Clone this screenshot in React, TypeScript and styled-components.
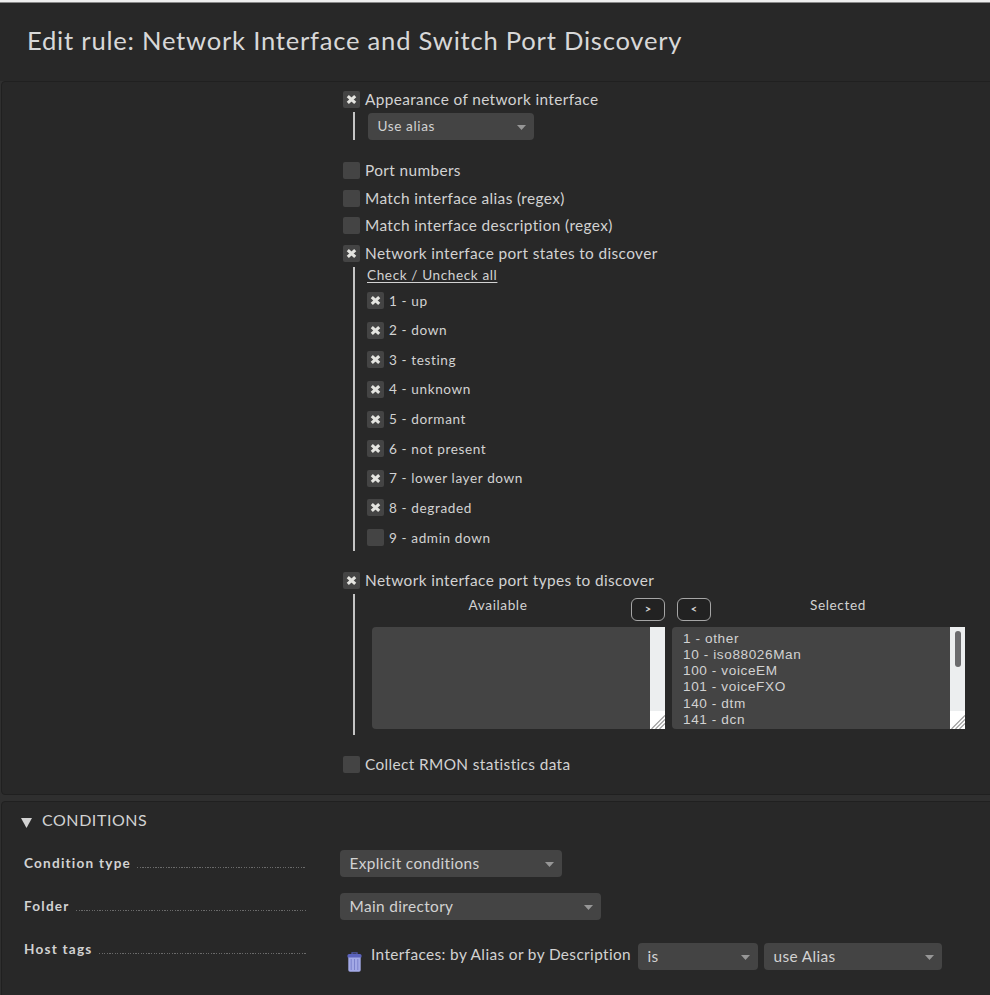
import React from 'react';
import styled, { createGlobalStyle } from 'styled-components';

const GlobalStyle = createGlobalStyle`
  *, *::before, *::after { box-sizing: border-box; }
  body {
    margin: 0;
    background: #303030;
    color: #d2d2d2;
    font-family: Lato, "Liberation Sans", sans-serif;
  }
`;

const Page = styled.div`
  width: 990px;
  height: 995px;
  overflow: hidden;
  display: flex;
  flex-direction: column;
  background: #2f2f2f;
`;

const Header = styled.header`
  height: 81px;
  flex: none;
  padding: 20px 0 0 27px;
  border-top: 2px solid #efefef;
  box-shadow: inset 0 1px 0 #8a8a8a;
  background: #282828;
`;

const Title = styled.h1`
  margin: 0;
  font-size: 25.6px;
  font-weight: 400;
  line-height: 36px;
  letter-spacing: 0.77px;
  white-space: nowrap;
  color: #d8d8d8;
`;

const Panel = styled.section<{ $height: number }>`
  height: ${(p) => p.$height}px;
  flex: none;
  margin: 0 -4px 6px 1px;
  border: 1px solid #202020;
  border-radius: 4px;
  background: #282828;
`;

const Options = styled.div`
  display: flex;
  flex-direction: column;
  padding: 9px 0 0 341px;
`;

const Option = styled.label<{ $gap?: number }>`
  display: flex;
  height: 17px;
  margin-top: ${(p) => p.$gap ?? 0}px;
  gap: 5px;
  font-size: 15.4px;
  line-height: 16px;
  letter-spacing: 0.37px;
  white-space: nowrap;
`;

const Box = styled.span`
  width: 17px;
  height: 17px;
  flex: none;
  display: grid;
  place-items: center;
  border-radius: 2px;
  background: #444444;
`;

const Nested = styled.div<{ $height: number; $gap?: number }>`
  height: ${(p) => p.$height}px;
  margin: ${(p) => p.$gap ?? 5}px 0 0 10px;
  border-left: 2px solid #c4c4c4;
`;

const Dropdown = styled.div<{ $width: number; $small?: boolean }>`
  width: ${(p) => p.$width}px;
  height: 27px;
  flex: none;
  display: flex;
  align-items: center;
  justify-content: space-between;
  padding: 0 8px 2px 9.500px;
  border-radius: 4px;
  background: #444444;
  font-size: ${(p) => (p.$small ? 13.6 : 15.4)}px;
  letter-spacing: ${(p) => (p.$small ? 0.6 : 0.37)}px;
  white-space: nowrap;

  svg { margin-top: 3px; }
`;

const AliasSlot = styled.div`
  padding: 1px 0 0 13px;
`;

const StateList = styled.div`
  display: flex;
  flex-direction: column;
  align-items: flex-start;
  padding-left: 12px;
`;

const CheckAll = styled.a`
  height: 17px;
  font-size: 13.6px;
  line-height: 17px;
  letter-spacing: 0.6px;
  text-decoration: underline;
  text-underline-offset: 2px;
`;

const State = styled.label`
  display: flex;
  align-items: center;
  gap: 5px;
  height: 17px;
  margin-bottom: 12.65px;
  font-size: 13.6px;
  letter-spacing: 0.6px;
  white-space: nowrap;

  &:first-of-type { margin-top: 8px; }
`;

const Transfer = styled.div`
  display: grid;
  grid-template-columns: 293px 293px;
  column-gap: 7px;
  padding: 2px 0 0 17px;
`;

const ListHead = styled.div<{ $reverse?: boolean }>`
  display: flex;
  flex-direction: ${(p) => (p.$reverse ? 'row-reverse' : 'row')};
  height: 31px;
  padding: ${(p) => (p.$reverse ? '0 0 0 5px' : '0')};
`;

const ListTitle = styled.span<{ $shift?: number }>`
  flex: 1;
  padding-right: ${(p) => p.$shift ?? 0}px;
  text-align: center;
  font-size: 13.6px;
  line-height: 18px;
  letter-spacing: 0.6px;
`;

const MoveButton = styled.button`
  width: 34px;
  height: 23px;
  margin: 2px 0 0;
  padding: 0 0 2px;
  border: 1px solid #a6a6a6;
  border-radius: 6px;
  background: #222222;
  color: #d2d2d2;
  font: 700 11px/19px Lato, sans-serif;
`;

const ListBox = styled.div`
  display: flex;
  height: 102px;
  overflow: hidden;
  border-radius: 4px 0 0 4px;
  background: #444444;
`;

const Items = styled.ul`
  flex: 1;
  margin: 0;
  padding: 4px 0 0 11px;
  list-style: none;
  font: 13.6px/16.15px "Liberation Sans", Arial, sans-serif;
  letter-spacing: 0.6px;
  white-space: nowrap;
`;

const Track = styled.div`
  width: 15px;
  display: flex;
  flex-direction: column;
  align-items: center;
  justify-content: space-between;
  background: #eceeef;
`;

const Thumb = styled.div<{ $visible: boolean }>`
  width: 6px;
  height: 36px;
  margin-top: 4px;
  border-radius: 3px;
  background: ${(p) => (p.$visible ? '#6b6b6d' : 'transparent')};
`;

const SectionTitle = styled.h2`
  display: flex;
  align-items: center;
  gap: 10px;
  height: 18px;
  margin: 8px 0 0 19px;
  font-size: 16px;
  font-weight: 400;
  letter-spacing: 0.55px;

  svg { margin-top: 8px; }
`;

const FormRow = styled.div<{ $top: number }>`
  display: flex;
  align-items: flex-start;
  height: 27px;
  margin-top: ${(p) => p.$top}px;
  padding-left: 22px;
`;

const Legend = styled.div`
  width: 282px;
  display: flex;
  align-items: baseline;
  flex: none;
  margin-right: 34px;
  padding-top: 4px;
  font-size: 13.6px;
  font-weight: 700;
  line-height: 18px;
  letter-spacing: 1.22px;
  white-space: nowrap;
`;

const Dots = styled.span`
  flex: 1;
  height: 1px;
  margin-left: 6px;
  background: repeating-linear-gradient(90deg, #6a6a6a 0 1.3px, transparent 1.3px 2.6px);
`;

const TagCondition = styled.div`
  display: flex;
  align-items: flex-start;
  padding-top: 7px;
  font-size: 15.4px;
  letter-spacing: 0.37px;
  white-space: nowrap;

  ${Dropdown} + ${Dropdown} { margin-left: 6px; }
`;

const TrashSlot = styled.span`
  width: 31px;
  padding: 9px 0 0 7px;
  line-height: 0;
`;

const TagName = styled.span`
  width: 267px;
  line-height: 23px;
`;

const Cross = () => (
  <svg width="11" height="11" viewBox="0 0 11 11">
    <path d="M1.8 2.1 9.2 8.9M9.2 2.1 1.8 8.9" stroke="#e4e4e0" strokeWidth="3.1" />
  </svg>
);

const Caret = () => (
  <svg width="9" height="5" viewBox="0 0 9 5">
    <path d="M0 0h9L4.5 5z" fill="#979797" />
  </svg>
);

const Grip = () => (
  <svg width="15" height="18" viewBox="0 0 15 18">
    <path d="M0 0h15v18H0z" fill="#fff" />
    <path d="M1.5 18 15 4.5M5.5 18 15 8.5M9.5 18l5.5-5.5" stroke="#999" strokeWidth="1.1" />
  </svg>
);

const Trash = () => (
  <svg width="15" height="20" viewBox="0 0 15 20">
    <path d="M5 2.2V.8h5v1.4" fill="none" stroke="#5259a8" strokeWidth="1.3" />
    <rect x="0.5" y="2" width="14" height="4" rx="1.5" fill="#5b63bd" />
    <path d="M1.3 5.5h12.4V18q0 1.7-1.7 1.7H3Q1.3 19.7 1.3 18z" fill="#a3a9e6" />
    <path d="M4.2 7v11M7.5 7v11M10.8 7v11" stroke="#7c83cc" strokeWidth="1" />
  </svg>
);

const Check = ({ on }: { on?: boolean }) => <Box>{on && <Cross />}</Box>;

const Select = ({ value, ...style }: { value: string; $width: number; $small?: boolean }) => (
  <Dropdown {...style}>
    {value}
    <Caret />
  </Dropdown>
);

const List = ({ items }: { items: string[] }) => (
  <ListBox>
    <Items>
      {items.map((item) => (
        <li key={item}>{item}</li>
      ))}
    </Items>
    <Track>
      <Thumb $visible={items.length > 0} />
      <Grip />
    </Track>
  </ListBox>
);

const states = ['up', 'down', 'testing', 'unknown', 'dormant', 'not present', 'lower layer down', 'degraded', 'admin down'];
const selectedTypes = ['1 - other', '10 - iso88026Man', '100 - voiceEM', '101 - voiceFXO', '140 - dtm', '141 - dcn'];

export default function App() {
  return (
    <Page>
      <GlobalStyle />
      <Header>
        <Title>Edit rule: Network Interface and Switch Port Discovery</Title>
      </Header>
      <Panel $height={714}>
        <Options>
          <Option><Check on />Appearance of network interface</Option>
          <Nested $height={28} $gap={4}>
            <AliasSlot><Select value="Use alias" $width={166} $small /></AliasSlot>
          </Nested>
          <Option $gap={22}><Check />Port numbers</Option>
          <Option $gap={11}><Check />Match interface alias (regex)</Option>
          <Option $gap={10}><Check />Match interface description (regex)</Option>
          <Option $gap={11}><Check on />Network interface port states to discover</Option>
          <Nested $height={284}>
            <StateList>
              <CheckAll>Check / Uncheck all</CheckAll>
              {states.map((name, i) => (
                <State key={name}><Check on={i < 8} />{`${i + 1} - ${name}`}</State>
              ))}
            </StateList>
          </Nested>
          <Option $gap={21}><Check on />Network interface port types to discover</Option>
          <Nested $height={141}>
            <Transfer>
              <ListHead>
                <ListTitle $shift={7}>Available</ListTitle>
                <MoveButton>&gt;</MoveButton>
              </ListHead>
              <ListHead $reverse>
                <ListTitle>Selected</ListTitle>
                <MoveButton>&lt;</MoveButton>
              </ListHead>
              <List items={[]} />
              <List items={selectedTypes} />
            </Transfer>
          </Nested>
          <Option $gap={21}><Check />Collect RMON statistics data</Option>
        </Options>
      </Panel>
      <Panel $height={230}>
        <SectionTitle>
          <svg width="11" height="10" viewBox="0 0 11 10"><path d="M0 0h11L5.5 10z" fill="#d2d2d2" /></svg>
          CONDITIONS
        </SectionTitle>
        <FormRow $top={22}>
          <Legend>Condition type<Dots /></Legend>
          <Select value="Explicit conditions" $width={222} />
        </FormRow>
        <FormRow $top={16}>
          <Legend>Folder<Dots /></Legend>
          <Select value="Main directory" $width={261} />
        </FormRow>
        <FormRow $top={16}>
          <Legend>Host tags<Dots /></Legend>
          <TagCondition>
            <TrashSlot><Trash /></TrashSlot>
            <TagName>Interfaces: by Alias or by Description</TagName>
            <Select value="is" $width={120} />
            <Select value="use Alias" $width={178} />
          </TagCondition>
        </FormRow>
      </Panel>
    </Page>
  );
}
